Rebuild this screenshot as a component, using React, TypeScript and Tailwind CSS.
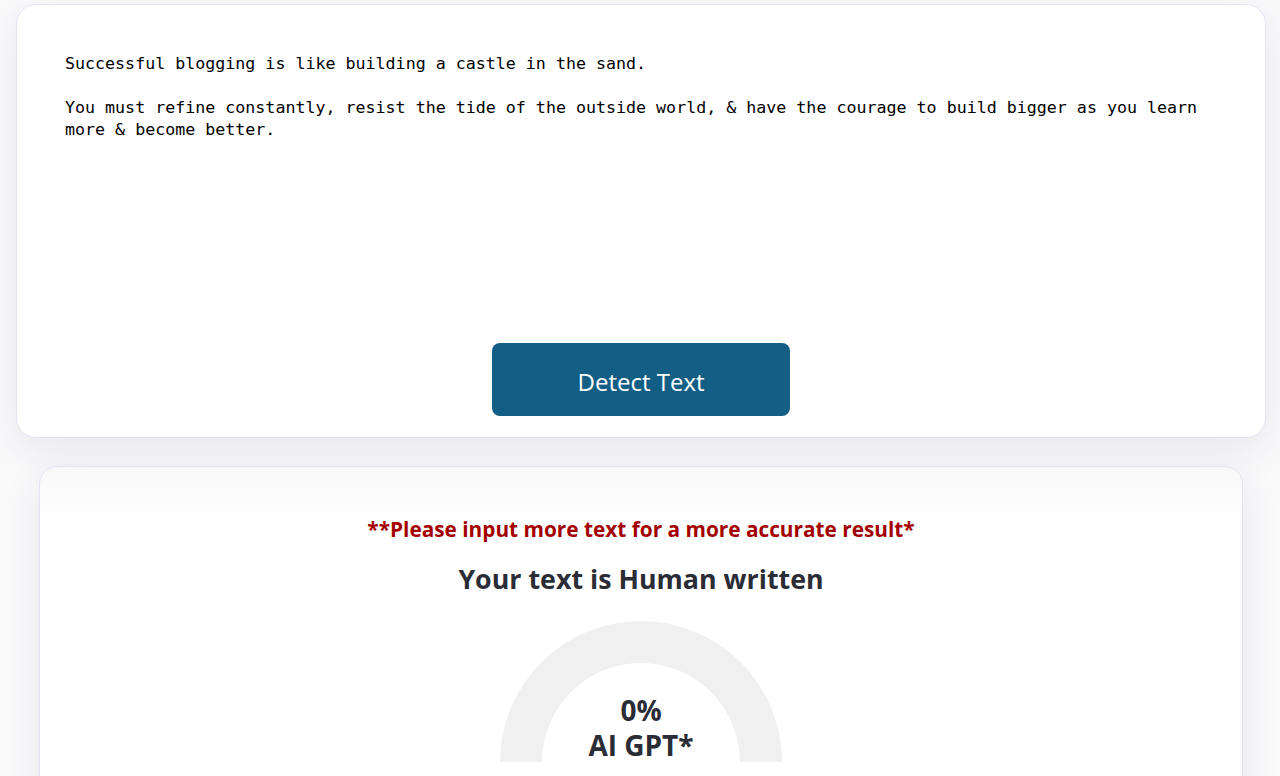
export default function App() {
  const text =
    "Successful blogging is like building a castle in the sand.\n\nYou must refine constantly, resist the tide of the outside world, & have the courage to build bigger as you learn more & become better.";

  return (
    <div className="min-h-screen overflow-hidden bg-[#fafafb] pt-1 font-['Open_Sans','Noto_Sans',sans-serif]">
      <div className="ml-4 mr-[14px] flex h-[434px] flex-col rounded-[20px] border border-[#e2e4f3] bg-white px-12 pt-[48px] pb-[21px] shadow-[0_12px_40px_rgba(40,45,90,0.09)]">
        <p className="w-[1150px] flex-1 whitespace-pre-wrap font-['DejaVu_Sans_Mono',monospace] text-[16.65px] leading-[22px] text-black">
          {text}
        </p>
        <div className="flex justify-center">
          <button className="h-[73px] w-[298px] rounded-lg bg-[#135e84] pt-1 text-[24px] text-white">
            Detect Text
          </button>
        </div>
      </div>

      <div className="mt-[28px] ml-[39px] mr-[37px] h-[400px] rounded-[18px] border border-[#e2e4f3] bg-gradient-to-b from-[#f8f8f9] to-white to-[60px] pt-[47px] shadow-[0_12px_40px_rgba(40,45,90,0.09)]">
        <p className="text-center text-[20.8px] font-bold leading-[30px] text-[#a30000]">
          **Please input more text for a more accurate result*
        </p>
        <h2 className="mt-[17px] text-center text-[26.8px] font-bold leading-[36px] text-[#2b2d36]">
          Your text is Human written
        </h2>
        <div className="relative mx-auto mt-[24px] h-[142px] w-[282px]">
          <svg width="282" height="142" viewBox="0 0 282 142">
            <path
              d="M0 141 A141 141 0 0 1 282 141 L240 141 A99 99 0 0 0 42 141 Z"
              fill="#f0f0f0"
            />
          </svg>
          <div className="absolute inset-x-0 top-[72px] text-center text-[28px] font-bold leading-[35px] text-[#2b2d36]">
            <div>0%</div>
            <div>AI GPT*</div>
          </div>
        </div>
      </div>
    </div>
  );
}
